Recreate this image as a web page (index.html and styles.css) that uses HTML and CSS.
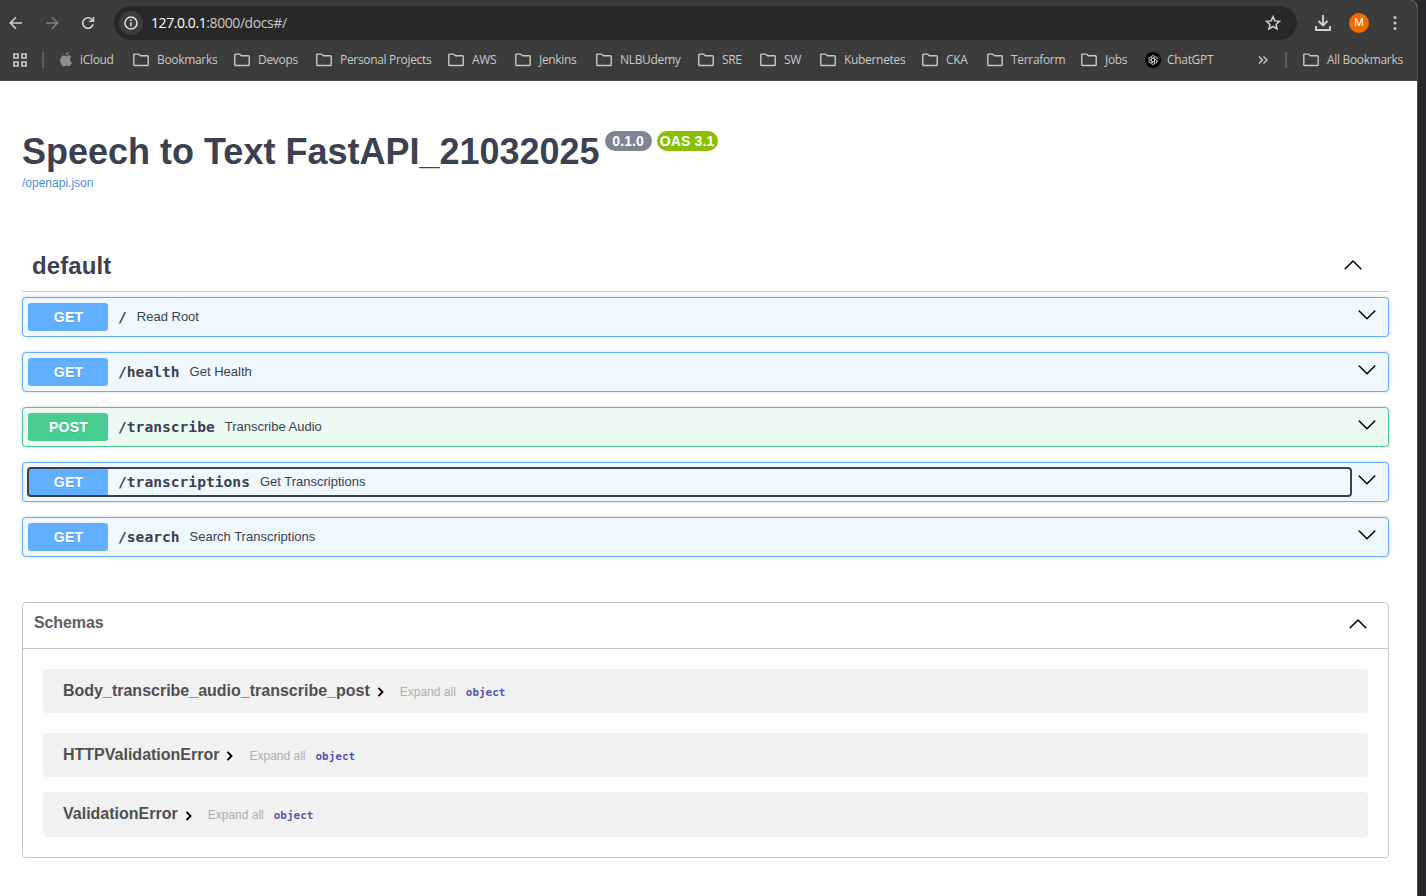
FILE: index.html
```
<!DOCTYPE html>
<html lang="en">
<head>
<meta charset="utf-8">
<title>Speech to Text FastAPI_21032025</title>
<link rel="stylesheet" href="styles.css">
</head>
<body>
<svg class="defs" width="0" height="0">
  <symbol id="folder" viewBox="0 0 16 14"><path d="M.8 11.700V1.800q0-.7.7-.7h4.100l1.800 1.700h7q.8 0 .8.800v8.100q0 .8-.8.800H1.600q-.8 0-.8-.8z" fill="none" stroke="currentColor" stroke-width="1.400"/></symbol>
  <symbol id="down" viewBox="0 0 20 12"><path d="M2.200 2 10 9.700 17.800 2" fill="none" stroke="#000" stroke-width="1.500" stroke-linecap="round" stroke-linejoin="round"/></symbol>
  <symbol id="up" viewBox="0 0 20 12"><path d="M2.200 9.700 10 2l7.800 7.700" fill="none" stroke="#000" stroke-width="1.500" stroke-linecap="round" stroke-linejoin="round"/></symbol>
  <symbol id="right" viewBox="0 0 8 10"><path d="m1.500.8 4 4.200-4 4.200" fill="none" stroke="#000" stroke-width="1.900"/></symbol>
</svg>
<div class="window">
  <header class="chrome">
    <div class="toolbar">
      <svg class="nav" viewBox="0 0 16 16"><path d="M14 8H2.500M8 2.300 2.300 8 8 13.700" /></svg>
      <svg class="nav nav-off" viewBox="0 0 16 16"><path d="M2 8h11.500M8 2.300 13.700 8 8 13.700" /></svg>
      <svg class="nav" viewBox="0 0 16 16"><path d="M13 9.200A5.200 5.200 0 1 1 11.800 4.500L13.300 6M13.500 2v4.300H9.200"/></svg>
      <div class="address">
        <span class="info"><svg width="14" height="14" viewBox="0 0 14 14"><circle cx="7" cy="7" r="6" fill="none" stroke="#e3e3e3" stroke-width="1.500"/><path d="M7 6.300v4M7 3.500v1.500" stroke="#e3e3e3" stroke-width="1.500"/></svg></span>
        <span class="url">127.0.0.1<span class="rest">:8000/docs#/</span></span>
        <svg class="star" viewBox="0 0 16 16"><path d="m8 1.600 1.800 4.300 4.700.4L11 9.400l1.100 4.600L8 11.500 3.900 14 5 9.400 1.500 6.300l4.700-.4z" fill="none" stroke="#d0d0d0" stroke-width="1.500"/></svg>
      </div>
      <svg class="download" viewBox="0 0 18 18"><path d="M9 1v10M4.500 7 9 11.500 13.500 7M2 12v4h14v-4" fill="none" stroke="#d0d0d0" stroke-width="1.900"/></svg>
      <span class="avatar">M</span>
      <svg class="kebab" viewBox="0 0 4 16"><circle cx="2" cy="2.500" r="1.500"/><circle cx="2" cy="8" r="1.500"/><circle cx="2" cy="13.500" r="1.500"/></svg>
    </div>
    <nav class="bookmarks">
      <svg class="apps" viewBox="0 0 14 14"><path d="M1 1h4v4H1zM9 1h4v4H9zM1 9h4v4H1zM9 9h4v4H9z" fill="none" stroke="#c7c7c7" stroke-width="1.700"/></svg>
      <i class="rule"></i>
      <div class="links">
        <span class="link site"><svg viewBox="0 0 12 15"><path d="M8.500 0c.1 1.600-1.200 3.100-2.700 3.100C5.700 1.600 7 .2 8.500 0zM6.100 4.100c.7 0 1.500-.8 2.700-.8 1.100 0 2.100.6 2.700 1.500-2.300 1.400-1.900 4.600.5 5.600-.5 1.500-1.700 3.900-3.200 3.900-.9 0-1.300-.5-2.400-.5s-1.500.5-2.400.5C2.200 14.300.2 11.200.2 8.200c0-3 1.800-4.700 3.600-4.700 1 0 1.700.6 2.300.6z" fill="#8d8d8d"/></svg>iCloud</span>
        <span class="link"><svg><use href="#folder"/></svg>Bookmarks</span>
        <span class="link"><svg><use href="#folder"/></svg>Devops</span>
        <span class="link"><svg><use href="#folder"/></svg>Personal Projects</span>
        <span class="link"><svg><use href="#folder"/></svg>AWS</span>
        <span class="link"><svg><use href="#folder"/></svg>Jenkins</span>
        <span class="link"><svg><use href="#folder"/></svg>NLBUdemy</span>
        <span class="link"><svg><use href="#folder"/></svg>SRE</span>
        <span class="link"><svg><use href="#folder"/></svg>SW</span>
        <span class="link"><svg><use href="#folder"/></svg>Kubernetes</span>
        <span class="link"><svg><use href="#folder"/></svg>CKA</span>
        <span class="link"><svg><use href="#folder"/></svg>Terraform</span>
        <span class="link"><svg><use href="#folder"/></svg>Jobs</span>
        <span class="link chat"><svg viewBox="0 0 16 16"><circle cx="8" cy="8" r="8" fill="#000"/><g transform="translate(1.200 1.200) scale(.85)" fill="none" stroke="#d0d0d0" stroke-width=".8"><path id="petal" d="M6 8.900V4.700a2.100 2.100 0 0 1 3.800-1.200M6 6.900l3.700-2.100a2.100 2.100 0 0 1 2.900 2.400"/><use href="#petal" transform="rotate(60 8 8)"/><use href="#petal" transform="rotate(120 8 8)"/><use href="#petal" transform="rotate(180 8 8)"/><use href="#petal" transform="rotate(240 8 8)"/><use href="#petal" transform="rotate(300 8 8)"/></g></svg>ChatGPT</span>
        <svg class="more" viewBox="0 0 10 8"><path d="m1 .5 3.500 3.500L1 7.500M5.500.5 9 4 5.500 7.500" fill="none" stroke="#c7c7c7" stroke-width="1.400"/></svg>
        <i class="rule"></i>
        <span class="link"><svg><use href="#folder"/></svg>All Bookmarks</span>
      </div>
    </nav>
  </header>
  <main class="page">
    <section class="title">
      <h1>Speech to Text FastAPI_21032025</h1>
      <span class="badge">0.1.0</span><span class="badge oas">OAS 3.1</span>
    </section>
    <a class="spec">/openapi.json</a>
    <section class="tag">
      <h2>default</h2>
      <svg class="arrow"><use href="#up"/></svg>
    </section>
    <section class="operations">
      <div class="op"><div class="summary"><b class="method">GET</b><code>/</code><span>Read Root</span></div><svg class="arrow"><use href="#down"/></svg></div>
      <div class="op"><div class="summary"><b class="method">GET</b><code>/health</code><span>Get Health</span></div><svg class="arrow"><use href="#down"/></svg></div>
      <div class="op post"><div class="summary"><b class="method">POST</b><code>/transcribe</code><span>Transcribe Audio</span></div><svg class="arrow"><use href="#down"/></svg></div>
      <div class="op"><div class="summary focused"><b class="method">GET</b><code>/transcriptions</code><span>Get Transcriptions</span></div><svg class="arrow"><use href="#down"/></svg></div>
      <div class="op"><div class="summary"><b class="method">GET</b><code>/search</code><span>Search Transcriptions</span></div><svg class="arrow"><use href="#down"/></svg></div>
    </section>
    <section class="schemas">
      <div class="schemas-head"><h4>Schemas</h4><svg class="arrow"><use href="#up"/></svg></div>
      <div class="models">
        <div class="model"><b>Body_transcribe_audio_transcribe_post</b><svg><use href="#right"/></svg><span class="expand">Expand all</span><span class="type">object</span></div>
        <div class="model"><b>HTTPValidationError</b><svg><use href="#right"/></svg><span class="expand">Expand all</span><span class="type">object</span></div>
        <div class="model last"><b>ValidationError</b><svg><use href="#right"/></svg><span class="expand">Expand all</span><span class="type">object</span></div>
      </div>
    </section>
  </main>
</div>
</body>
</html>
```
FILE: styles.css
```
* { box-sizing: border-box; }
html, body { height: 100%; margin: 0; }
body { background: #27282b; overflow: hidden; font-family: "Liberation Sans", Arial, sans-serif; color: #3b4151; }
h1, h2, h4 { margin: 0; }
svg { display: block; flex: none; }
.defs { position: absolute; }
.window { width: 1418px; height: 896px; background: #fff; border-right: 1px solid #4a4b4d; border-top-right-radius: 8px; overflow: hidden; }

.chrome { height: 81px; background: #3c3c3c; border-bottom: 1px solid #474747; color: #c7c7c7; font-family: "Open Sans", "Noto Sans", sans-serif; }
.toolbar { display: flex; align-items: center; height: 46px; padding-left: 8px; }
.nav { width: 16px; height: 16px; margin-right: 20px; fill: none; stroke: #d0d0d0; stroke-width: 1.6; }
.nav-off { stroke: #7c7c7c; }
.address { display: flex; align-items: center; width: 1183px; height: 34px; margin-left: -2px; padding: 0 16px 0 5px; border-radius: 17px; background: #282828; }
.info { display: flex; align-items: center; justify-content: center; width: 24px; height: 24px; border-radius: 50%; background: #3c3c3c; }
.url { flex: 1; margin: -1px 0 0 8px; color: #fff; font-size: 14px; letter-spacing: -.42px; }
.rest { color: #c7c7c7; }
.star { width: 16px; height: 16px; }
.download { width: 18px; height: 18px; margin-left: 17px; }
.avatar { width: 20px; height: 20px; margin-left: 17px; border-radius: 50%; background: #ef6c00; color: #fff; font: 11px/20px Roboto, sans-serif; text-align: center; }
.kebab { width: 4px; height: 16px; margin-left: 24px; fill: #c7c7c7; }

.bookmarks { display: flex; align-items: center; height: 28px; padding-left: 13px; font-size: 12px; line-height: 16px; letter-spacing: -.32px; }
.apps { width: 14px; height: 14px; }
.rule { flex: none; width: 2px; height: 16px; margin-left: 15px; background: #5e5e5e; }
.links { display: grid; flex: none; grid-template-columns: 73px 101px 82px 132px 67px 81px 102px 62px 60px 102px 65px 94px 64px 113px 12px 33px 114px; align-items: center; margin: -1px 0 0 16px; }
.links .rule { margin-left: 15px; }
.link { display: flex; align-items: center; gap: 8px; white-space: nowrap; }
.link svg { width: 16px; height: 14px; }
.link.site svg { width: 12px; height: 15px; }
.link.chat { gap: 6px; }
.link.chat svg { width: 16px; height: 16px; }
.more { width: 10px; height: 8px; }

.page { padding: 50px 28px 0 22px; }
.title { display: flex; align-items: flex-start; height: 42px; }
.title h1 { font-size: 36px; line-height: 41px; white-space: nowrap; }
.badge { width: 47px; height: 20px; margin-left: 5px; border-radius: 10px; background: #7d8492; color: #fff; font-size: 14px; line-height: 20px; font-weight: bold; text-align: center; letter-spacing: .12px; }
.badge.oas { width: 61px; background: #89bf04; }
.spec { display: block; margin-top: 3px; color: #4990e2; font-size: 12px; line-height: 14px; }
.tag { display: flex; align-items: center; justify-content: space-between; height: 52px; margin-top: 50px; padding: 0 26px 0 10px; border-bottom: 1px solid #c5c6ca; }
.tag h2 { font-size: 24px; line-height: 28px; letter-spacing: .1px; }
.arrow { width: 20px; height: 12px; }
.tag .arrow { margin-top: -2px; }

.operations { display: grid; gap: 15px; margin-top: 5px; }
.op { display: flex; align-items: center; height: 40px; padding: 0 11px 0 5px; border: 1px solid #61affe; border-radius: 4px; background: #eff7ff; box-shadow: 0 0 3px rgba(0,0,0,.19); }
.op.post { border-color: #49cc90; background: #edfaf4; }
.op .arrow { margin-top: -5px; }
.summary { display: flex; align-items: center; flex: 1; height: 28px; margin-right: 6px; }
.focused { outline: 2px solid #3b4151; outline-offset: -1px; border-radius: 3px; }
.method { width: 80px; height: 28px; padding-left: 1px; border-radius: 3px; background: #61affe; color: #fff; font-size: 14px; line-height: 28px; text-align: center; letter-spacing: .2px; text-shadow: 0 1px 0 rgba(0,0,0,.1); }
.post .method { background: #49cc90; }
.summary code { margin-left: 10px; font: bold 14.62px/20px "DejaVu Sans Mono", monospace; }
.summary span { margin: -2px 0 0 10px; font-size: 13px; }

.schemas { height: 256px; margin-top: 45px; border: 1px solid #c5c6ca; border-radius: 4px; }
.schemas-head { display: flex; align-items: center; justify-content: space-between; height: 46px; padding: 0 20px 4px 11px; border-bottom: 1px solid #c5c6ca; color: #606060; }
.schemas-head h4 { margin-top: -2px; font-size: 16px; letter-spacing: -.1px; }
.models { padding: 20px; }
.model { display: flex; align-items: center; height: 44px; margin-bottom: 20px; padding: 0 20px; border-radius: 4px; background: #f1f1f1; color: #505050; }
.model:nth-child(2) { margin-bottom: 15px; }
.model.last { height: 45px; margin-bottom: 0; }
.model b { margin-top: -1px; font-size: 16px; }
.model.last b { margin-top: -2px; }
.model svg { width: 8px; height: 10px; margin: 2px 0 0 7px; }
.expand { margin: 2px 0 0 15px; color: #afaeae; font-size: 12px; }
.model.last .expand { margin-top: 1px; }
.type { margin: 2px 0 0 10px; color: #5555aa; font: bold 10.96px "DejaVu Sans Mono", monospace; }
```
